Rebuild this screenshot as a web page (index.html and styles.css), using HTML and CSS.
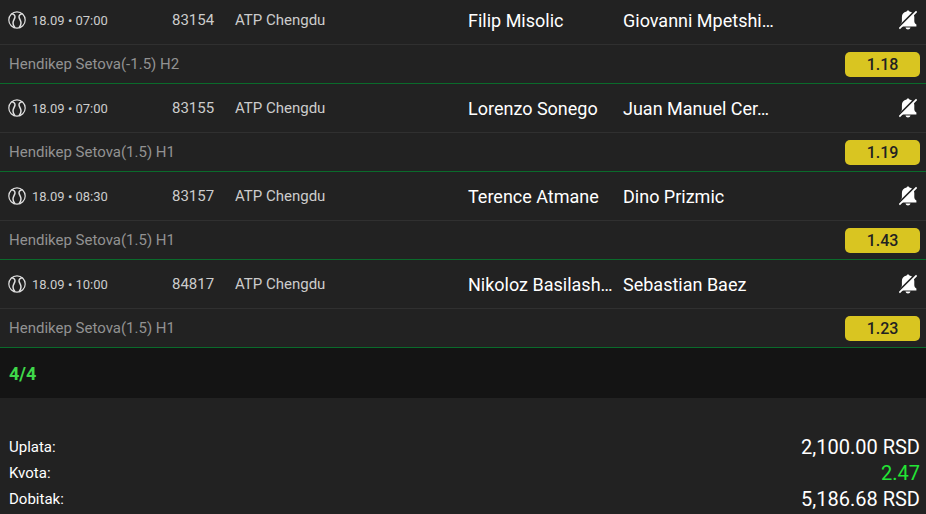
FILE: index.html
```html
<!DOCTYPE html>
<html lang="sr">
<head>
    <meta charset="UTF-8">
    <meta name="viewport" content="width=device-width, initial-scale=1.0">
    <title>Tiket</title>
    <link rel="stylesheet" href="styles.css">
</head>
<body>
    <svg class="sprite" aria-hidden="true">
        <symbol id="icon-tennis" viewBox="0 0 18 18">
            <g fill="none" stroke="currentColor">
                <circle cx="9" cy="9" r="8.2" stroke-width="1.2"/>
                <path d="M3.500 2.800C6 3 7.400 4.500 6.900 6.500S4.900 9.500 5 12S5.800 15.500 7 16.800M14.500 2.800C12 3 10.600 4.500 11.100 6.500S13.100 9.500 13 12S12.200 15.500 11 16.800" stroke-width="1.500"/>
            </g>
        </symbol>
        <symbol id="icon-bell-off" viewBox="0 0 18 20">
            <path fill="currentColor" d="M9 .4c.8 0 1.300.5 1.400 1.100 3.300.5 4.900 2.700 4.900 5.500v4c0 1.600.6 2.600 2.100 3.600v2H1v-2c1.500-1 1.900-2 1.900-3.600V7c0-2.800 1.500-5 4.700-5.500C7.700.9 8.200.4 9 .4zM6.500 17.500h5c-.3 1.200-1.200 1.900-2.500 1.900s-2.200-.7-2.500-1.900z"/>
            <path stroke="#222" stroke-width="2" d="M-.8 17.700L16.700 .2"/>
            <path stroke="currentColor" stroke-width="1.600" d="M.4 18.600L17.600 1.400"/>
        </symbol>
    </svg>

    <div class="ticket">
        <div class="match won">
            <div class="match-info">
                <svg class="icon-sport"><use href="#icon-tennis"/></svg>
                <span class="time">18.09 • 07:00</span>
                <span class="code">83154</span>
                <span class="league">ATP Chengdu</span>
                <span class="player">Filip Misolic</span>
                <span class="player">Giovanni Mpetshi…</span>
                <button class="btn-notify" aria-label="Obaveštenja"><svg><use href="#icon-bell-off"/></svg></button>
            </div>
            <div class="match-bet">
                <span>Hendikep Setova(-1.5) H2</span>
                <span class="odd">1.18</span>
            </div>
        </div>

        <div class="match won">
            <div class="match-info">
                <svg class="icon-sport"><use href="#icon-tennis"/></svg>
                <span class="time">18.09 • 07:00</span>
                <span class="code">83155</span>
                <span class="league">ATP Chengdu</span>
                <span class="player">Lorenzo Sonego</span>
                <span class="player">Juan Manuel Cer…</span>
                <button class="btn-notify" aria-label="Obaveštenja"><svg><use href="#icon-bell-off"/></svg></button>
            </div>
            <div class="match-bet">
                <span>Hendikep Setova(1.5) H1</span>
                <span class="odd">1.19</span>
            </div>
        </div>

        <div class="match won">
            <div class="match-info">
                <svg class="icon-sport"><use href="#icon-tennis"/></svg>
                <span class="time">18.09 • 08:30</span>
                <span class="code">83157</span>
                <span class="league">ATP Chengdu</span>
                <span class="player">Terence Atmane</span>
                <span class="player">Dino Prizmic</span>
                <button class="btn-notify" aria-label="Obaveštenja"><svg><use href="#icon-bell-off"/></svg></button>
            </div>
            <div class="match-bet">
                <span>Hendikep Setova(1.5) H1</span>
                <span class="odd">1.43</span>
            </div>
        </div>

        <div class="match won">
            <div class="match-info">
                <svg class="icon-sport"><use href="#icon-tennis"/></svg>
                <span class="time">18.09 • 10:00</span>
                <span class="code">84817</span>
                <span class="league">ATP Chengdu</span>
                <span class="player">Nikoloz Basilash…</span>
                <span class="player">Sebastian Baez</span>
                <button class="btn-notify" aria-label="Obaveštenja"><svg><use href="#icon-bell-off"/></svg></button>
            </div>
            <div class="match-bet">
                <span>Hendikep Setova(1.5) H1</span>
                <span class="odd">1.23</span>
            </div>
        </div>
    </div>

    <div class="hits">4/4</div>

    <div class="summary">
        <div class="summary-row"><span>Uplata:</span><span class="amount">2,100.00 RSD</span></div>
        <div class="summary-row"><span>Kvota:</span><span class="amount green">2.47</span></div>
        <div class="summary-row"><span>Dobitak:</span><span class="amount">5,186.68 RSD</span></div>
    </div>
</body>
</html>
```
FILE: styles.css
```css
* {
    box-sizing: border-box;
}
body {
    margin: 0;
    background: #222;
    color: #fff;
    font-family: Roboto, "Liberation Sans", sans-serif;
    font-size: 15px;
    overflow: hidden;
}
.sprite {
    display: none;
}
.ticket {
    margin-top: -4px;
}
.match {
    border-bottom: 1px solid #444;
}
.match.won {
    border-bottom-color: #0a6b2b;
}
.match-info {
    display: grid;
    grid-template-columns: 18px 140px 63px 239px 155px 1fr 18px;
    align-items: center;
    height: 49px;
    padding: 0 9px 0 8px;
    border-bottom: 1px solid #303030;
}
.icon-sport {
    width: 18px;
    height: 18px;
    color: #e0e0e0;
}
.time {
    padding-left: 6px;
    font-size: 13px;
    color: #ccc;
}
.code,
.league {
    padding-left: 6px;
    color: #ccc;
}
.player {
    font-size: 18px;
    white-space: nowrap;
}
.btn-notify {
    padding: 0;
    border: none;
    background: none;
    color: #fff;
    cursor: pointer;
}
.btn-notify svg {
    display: block;
    width: 18px;
    height: 20px;
}
.match-bet {
    display: flex;
    align-items: center;
    justify-content: space-between;
    height: 38px;
    padding: 0 6px 0 9px;
    color: #929292;
}
.odd {
    width: 75px;
    border-radius: 5px;
    background: #d9c521;
    color: #222;
    font-size: 16px;
    font-weight: 500;
    line-height: 25px;
    text-align: center;
}
.hits {
    padding: 1px 9px 0;
    background: #141414;
    color: #3fd84a;
    font-size: 18px;
    font-weight: 700;
    line-height: 49px;
}
.summary {
    padding: 36px 6px 0 9px;
}
.summary-row {
    display: flex;
    align-items: center;
    justify-content: space-between;
    height: 26px;
}
.amount {
    font-size: 20px;
}
.green {
    color: #22e535;
}
```
